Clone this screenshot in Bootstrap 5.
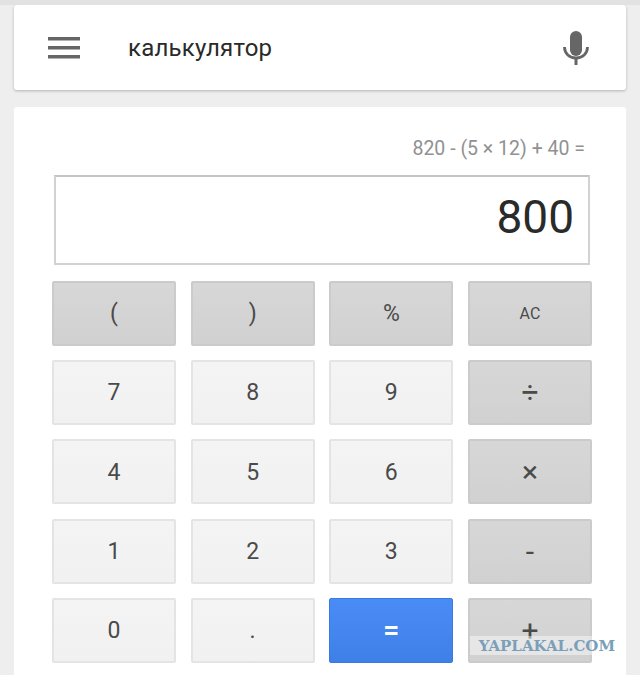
<!DOCTYPE html>
<html lang="ru">
<head>
    <meta charset="UTF-8">
    <meta name="viewport" content="width=device-width, initial-scale=1.0">
    <title>калькулятор</title>
    <link href="https://cdn.jsdelivr.net/npm/bootstrap@5.3.0/dist/css/bootstrap.min.css" rel="stylesheet">
    <style>
        html, body {
            height: 675px;
            overflow: hidden;
        }
        body {
            background-color: #eeeeee;
            font-family: Roboto, sans-serif;
            border-top: 5px solid #e2e2e2;
            padding: 0 14px;
        }
        .search-card {
            height: 85px;
            border-radius: 3px;
            box-shadow: 0 1px 3px rgba(0, 0, 0, 0.25);
            padding: 0 37px 0 34px;
        }
        .search-text {
            font-size: 24px;
            color: #2a2a2a;
            margin-left: 48px;
            letter-spacing: 0.2px;
        }
        .calc-card {
            margin-top: 17px;
            height: 600px;
            border-radius: 3px;
            padding: 29px 34px 0 38px;
        }
        .calc-formula {
            font-size: 19.5px;
            line-height: 26px;
            color: #919191;
            text-align: right;
            padding-right: 7px;
        }
        .calc-display {
            height: 90px;
            margin: 13px 2px 16px 2px;
            border: 2px solid #d2d2d2;
            border-top-color: #c4c4c4;
            font-size: 46px;
            color: #2a2a2a;
            padding: 0 14px 5px 0;
        }
        .calc-grid {
            display: grid;
            grid-template-columns: repeat(4, 124px);
            grid-auto-rows: 65px;
            column-gap: 14.67px;
            row-gap: 14.2px;
        }
        .calc-key {
            padding: 2px 0 0;
            border-radius: 2px;
            font-size: 23px;
            color: #4a4a4a;
            font-family: Roboto, sans-serif;
        }
        .key-num {
            background: linear-gradient(#f4f4f4, #f1f1f1);
            border: 2px solid #e4e4e4;
        }
        .key-op {
            background: linear-gradient(#d7d7d7, #d1d1d1);
            border: 2px solid #cbcbcb;
        }
        .key-eq {
            background: linear-gradient(#4a8cf6, #3f7fe8);
            border: 1px solid #3b78e0;
            color: #fff;
            font-weight: 700;
            font-size: 28px;
            padding-top: 0;
        }
        .key-small {
            font-size: 16px;
            padding-top: 0;
        }
        .key-bold {
            font-size: 30px;
            padding-top: 0;
        }
        .watermark {
            position: absolute;
            left: 470px;
            top: 636px;
            width: 145px;
            height: 19px;
            background: linear-gradient(to right, rgba(255, 255, 255, 0.45) 84%, transparent 84%);
            font-family: "DejaVu Serif", serif;
            font-weight: 700;
            font-size: 15px;
            line-height: 20px;
            color: #7b9fb9;
            text-align: right;
            white-space: nowrap;
        }
    </style>
</head>
<body>
    <div class="search-card bg-white d-flex align-items-center">
        <svg width="32" height="22" viewBox="0 0 32 22" fill="#666">
            <rect x="0" y="0" width="32" height="3.5"/>
            <rect x="0" y="9" width="32" height="3.5"/>
            <rect x="0" y="18" width="32" height="3.5"/>
        </svg>
        <span class="search-text">калькулятор</span>
        <svg class="ms-auto" width="26" height="34" viewBox="0 0 26 34">
            <rect x="7" y="0" width="12" height="25" rx="6" fill="#666"/>
            <path d="M1.500 16c0 6.500 5 11 11.500 11s11.500-4.500 11.500-11" fill="none" stroke="#666" stroke-width="2.800"/>
            <rect x="11.500" y="26" width="3" height="8" fill="#666"/>
        </svg>
    </div>

    <div class="calc-card bg-white">
        <div class="calc-formula">820 - (5 × 12) + 40 =</div>
        <div class="calc-display d-flex align-items-center justify-content-end">800</div>
        <div class="calc-grid">
            <button class="btn calc-key key-op">(</button>
            <button class="btn calc-key key-op">)</button>
            <button class="btn calc-key key-op">%</button>
            <button class="btn calc-key key-op key-small">AC</button>
            <button class="btn calc-key key-num">7</button>
            <button class="btn calc-key key-num">8</button>
            <button class="btn calc-key key-num">9</button>
            <button class="btn calc-key key-op key-bold">÷</button>
            <button class="btn calc-key key-num">4</button>
            <button class="btn calc-key key-num">5</button>
            <button class="btn calc-key key-num">6</button>
            <button class="btn calc-key key-op key-bold">×</button>
            <button class="btn calc-key key-num">1</button>
            <button class="btn calc-key key-num">2</button>
            <button class="btn calc-key key-num">3</button>
            <button class="btn calc-key key-op key-bold">-</button>
            <button class="btn calc-key key-num">0</button>
            <button class="btn calc-key key-num">.</button>
            <button class="btn calc-key key-eq">=</button>
            <button class="btn calc-key key-op key-bold">+</button>
        </div>
    </div>

    <div class="watermark">YAPLAKAL.COM</div>
    <script src="https://cdn.jsdelivr.net/npm/bootstrap@5.3.0/dist/js/bootstrap.bundle.min.js"></script>
</body>
</html>
